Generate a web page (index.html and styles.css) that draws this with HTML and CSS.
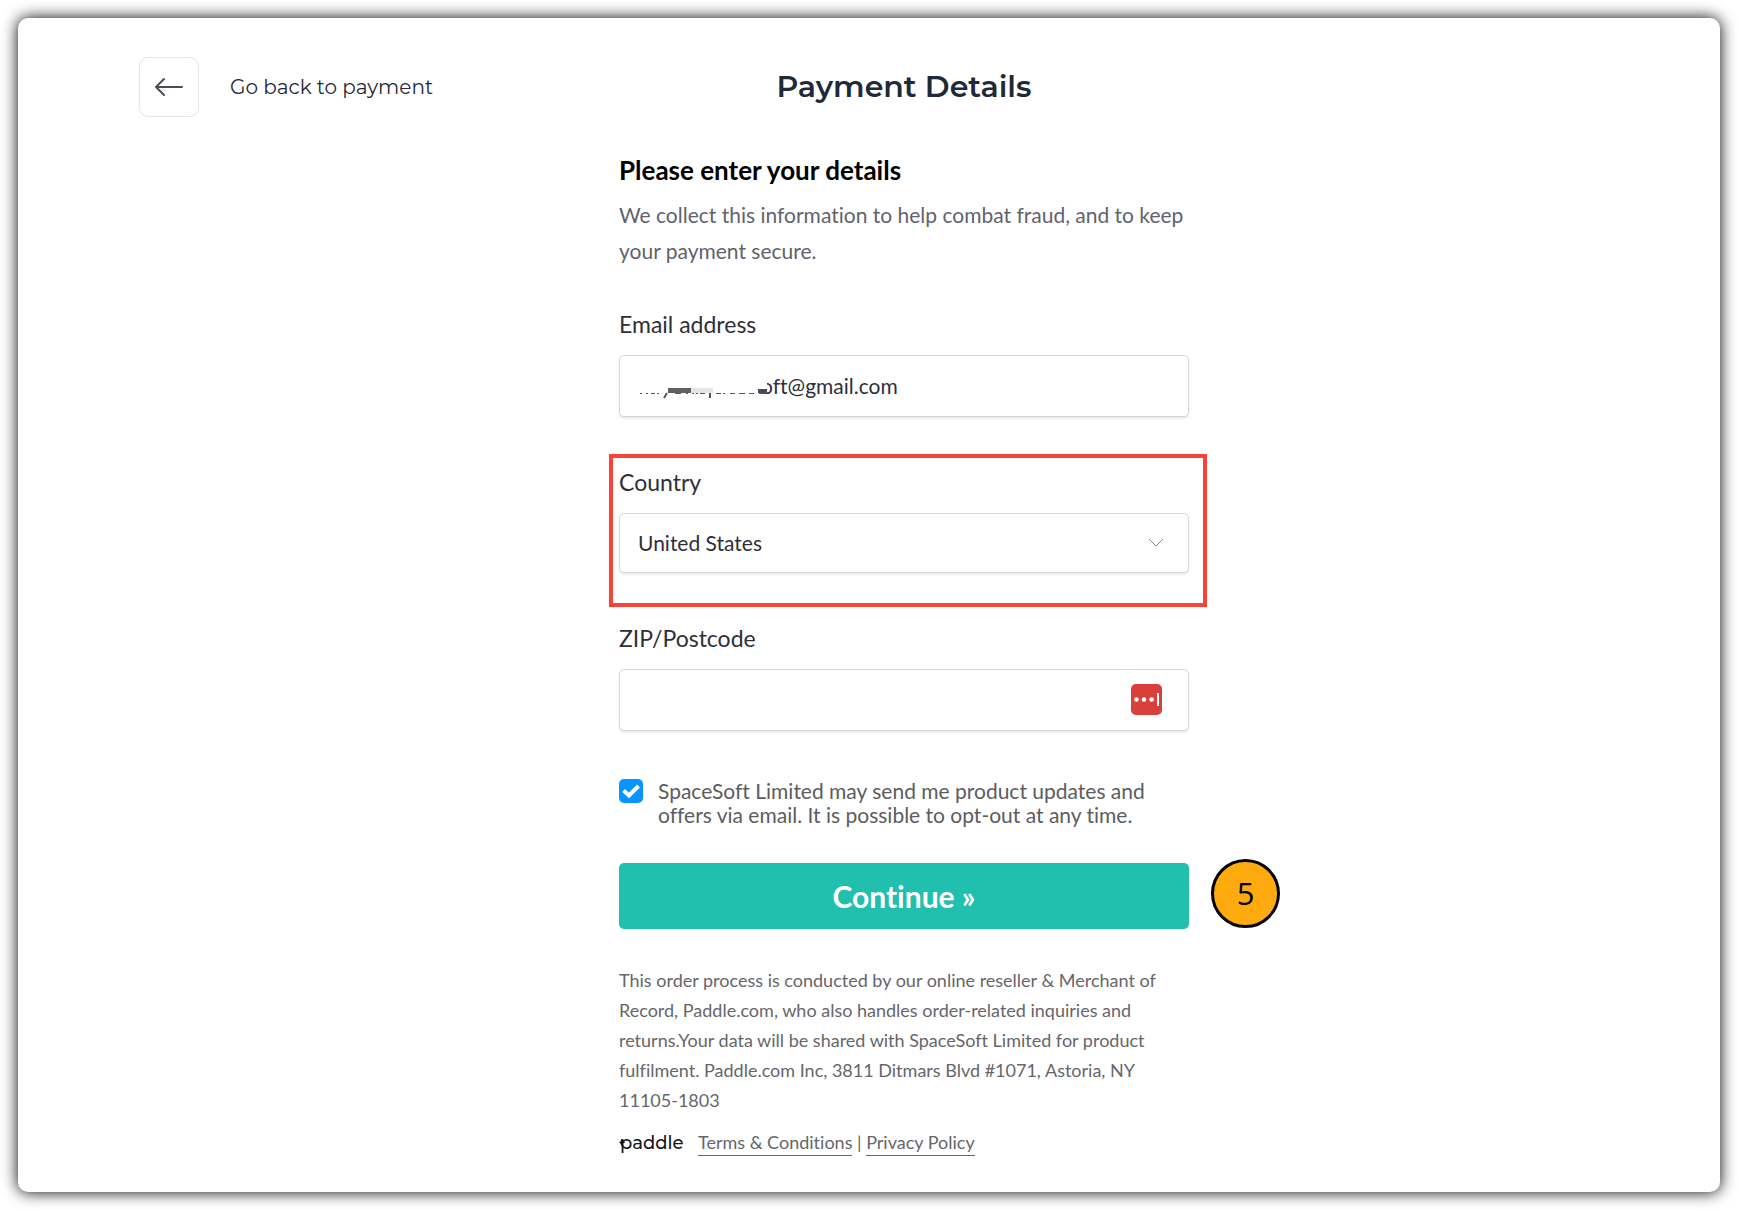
FILE: index.html
```html
<!DOCTYPE html>
<html lang="en">

<head>
  <title>Payment Details</title>
  <meta charset="utf-8" />
  <link rel="stylesheet" href="styles.css">
</head>

<body>
  <div class="card">

    <header class="top">
      <a class="back" href="#">
        <span class="back-icon">
          <svg width="30" height="20" viewBox="0 0 30 20" fill="none" stroke="#4b4b5a" stroke-width="2" stroke-linecap="round" stroke-linejoin="round">
            <path d="M28 10H2M10 2L2 10L10 18" />
          </svg>
        </span>
        <span>Go back to payment</span>
      </a>
      <h1>Payment Details</h1>
    </header>

    <main class="checkout">
      <h2>Please enter your details</h2>
      <p class="intro">We collect this information to help combat fraud, and to keep your payment secure.</p>

      <form>
        <div class="field">
          <label for="email">Email address</label>
          <div class="control">
            <input class="email" id="email" type="text" value="oft@gmail.com">
            <!-- hidden part of the address -->
            <svg class="mask" width="136" height="24" viewBox="0 0 136 24">
              <path fill="#fff" d="M0 0h129v17H0z" />
              <path fill="#5f6060" d="M30 12h23v5H30z" />
              <path fill="#e4e4e4" d="M53 12h22v5H53z" />
              <path fill="#4a4a58" d="M120 13h9v4h-9z" />
              <path stroke="#55555f" stroke-width="1" d="M2 17.5h2M8 17.5h2M13 17.5h4M19 17.5h2M37 17.5h6M48 17.5h2M54 17.5h2M58 17.5h2M62 17.5h5M78 17.5h5M85 17.5h2M92 17.5h5M101 17.5h6M111 17.5h5M121 17.5h7" />
              <path stroke="#55555f" stroke-width="2" fill="none" d="M29 17L26 22M72 17V22" />
            </svg>
          </div>
        </div>

        <div class="field highlight">
          <label for="country">Country</label>
          <div class="control">
            <select id="country">
              <option>United States</option>
            </select>
            <svg class="chevron" width="16" height="10" viewBox="0 0 16 10" fill="none" stroke="#8c8c94" stroke-width="1">
              <path d="M1 1L8 8L15 1" />
            </svg>
          </div>
        </div>

        <div class="field">
          <label for="zip">ZIP/Postcode</label>
          <div class="control">
            <input id="zip" type="text">
            <svg class="fill-icon" width="31" height="31" viewBox="0 0 31 31">
              <rect width="31" height="31" rx="5" fill="#d93f3b" />
              <g fill="#fff">
                <circle cx="5.5" cy="15.5" r="2.3" />
                <circle cx="13" cy="15.5" r="2.3" />
                <circle cx="20.6" cy="15.5" r="2.3" />
                <rect x="26" y="9" width="2" height="13" />
              </g>
            </svg>
          </div>
        </div>

        <div class="optin">
          <div class="tick">
            <input id="optin" type="checkbox" checked>
            <svg width="24" height="24" viewBox="0 0 24 24" fill="none" stroke="#fff" stroke-width="4">
              <path d="M4.500 11.500L10 16.500L19.500 7" />
            </svg>
          </div>
          <label for="optin">SpaceSoft Limited may send me product updates and offers via email. It is possible to opt-out at any time.</label>
        </div>

        <div class="submit">
          <button type="submit">Continue »</button>
          <span class="step">5</span>
        </div>
      </form>

      <p class="legal">This order process is conducted by our online reseller &amp; Merchant of Record, Paddle.com, who also handles order-related inquiries and returns.Your data will be shared with SpaceSoft Limited for product fulfilment. Paddle.com Inc, 3811 Ditmars Blvd #1071, Astoria, NY 11105-1803</p>

      <footer>
        <svg class="logo" width="65" height="28" viewBox="0 0 65 28">
          <text x="1" y="21">paddle</text>
          <path d="M2.500 10.500L3.500 13.500L6.500 14.500L3.500 15.500L2.500 18.500L1.500 15.500L0 14.500L1.500 13.500z" fill="#16161d" />
        </svg>
        <div class="links"><a href="#">Terms &amp; Conditions</a> | <a href="#">Privacy Policy</a></div>
      </footer>
    </main>

  </div>
</body>
</html>
```
FILE: styles.css
```css
* {
  box-sizing: border-box;
  margin: 0;
  padding: 0;
}

body {
  background: #fff;
  color: #2f2f3a;
  font-family: Lato, "Liberation Sans", sans-serif;
  font-variant-ligatures: none;
}

.card {
  margin: 18px;
  padding: 39px 51px 35px 121px;
  background: #fff;
  border-radius: 10px;
  box-shadow: 0 0 16px #000;
}

/* header */
.top {
  display: grid;
  grid-template-columns: 1fr auto 1fr;
  align-items: center;
  margin-bottom: 37px;
  font-family: Montserrat, Inter, sans-serif;
  color: #1f2937;
}

.top h1 {
  font-size: 30px;
  font-weight: 600;
  line-height: 40px;
}

.back {
  display: flex;
  align-items: center;
  gap: 31px;
  color: inherit;
  font-size: 20px;
  text-decoration: none;
}

.back-icon {
  display: flex;
  align-items: center;
  justify-content: center;
  width: 60px;
  height: 60px;
  border: 1px solid #e5e5ea;
  border-radius: 9px;
}

/* form column */
.checkout {
  max-width: 570px;
  margin: 0 auto;
}

.checkout h2 {
  margin-bottom: 11px;
  font-size: 26px;
  line-height: 32px;
  color: #000;
}

.intro {
  margin-bottom: 40px;
  font-size: 21px;
  line-height: 36px;
  color: #62626e;
}

.field {
  position: relative;
  margin-bottom: 50px;
}

.field label {
  display: block;
  margin-bottom: 16px;
  font-size: 23px;
  line-height: 30px;
}

.control {
  position: relative;
}

.control input,
.control select {
  display: block;
  width: 100%;
  height: 62px;
  padding: 0 18px 2px;
  border: 1px solid #d6d6d9;
  border-radius: 5px;
  background: #fff;
  box-shadow: 0 2px 2px rgba(0, 0, 0, 0.08);
  color: inherit;
  font-family: inherit;
  font-size: 21px;
  font-variant-ligatures: inherit;
  appearance: none;
}

.control select {
  height: 60px;
}

.control .email {
  padding-left: 141px;
}

.mask {
  position: absolute;
  top: 21px;
  left: 19px;
}

.chevron {
  position: absolute;
  top: 25px;
  right: 25px;
}

.fill-icon {
  position: absolute;
  top: 15px;
  right: 27px;
}

.highlight::after {
  content: "";
  position: absolute;
  top: -13px;
  right: -18px;
  bottom: -34px;
  left: -10px;
  border: 4px solid #fa4338;
  pointer-events: none;
}

.optin {
  display: flex;
  gap: 15px;
  margin-top: -2px;
  margin-bottom: 36px;
  font-size: 21px;
  line-height: 24px;
  color: #5c5c61;
}

.tick {
  position: relative;
  flex: none;
  width: 24px;
  height: 24px;
}

.tick input {
  display: block;
  width: 24px;
  height: 24px;
  border-radius: 5px;
  background: #0994ff;
  appearance: none;
}

.tick svg {
  position: absolute;
  top: 0;
  left: 0;
  pointer-events: none;
}

.submit {
  position: relative;
  margin-bottom: 36px;
}

.submit button {
  display: block;
  width: 100%;
  height: 66px;
  border: 0;
  border-radius: 5px;
  background: #21bfae;
  color: #fff;
  font-family: inherit;
  font-size: 30px;
  font-weight: bold;
  font-variant-ligatures: inherit;
}

.step {
  position: absolute;
  top: -4px;
  left: calc(100% + 22px);
  width: 69px;
  height: 69px;
  border: 3px solid #000;
  border-radius: 50%;
  background: #ffab0f;
  color: #000;
  font: 31px/63px "Open Sans", sans-serif;
  text-align: center;
}

.legal {
  margin-bottom: 12px;
  font-size: 18px;
  line-height: 30px;
  color: #66666b;
}

footer {
  display: flex;
  align-items: center;
  gap: 14px;
  font-size: 18px;
  line-height: 30px;
  color: #66666b;
}

.logo text {
  font: 500 18px Montserrat, Inter, sans-serif;
  fill: #16161d;
}

.links a {
  padding-bottom: 2px;
  border-bottom: 1px solid #66666b;
  color: inherit;
  text-decoration: none;
}
```
